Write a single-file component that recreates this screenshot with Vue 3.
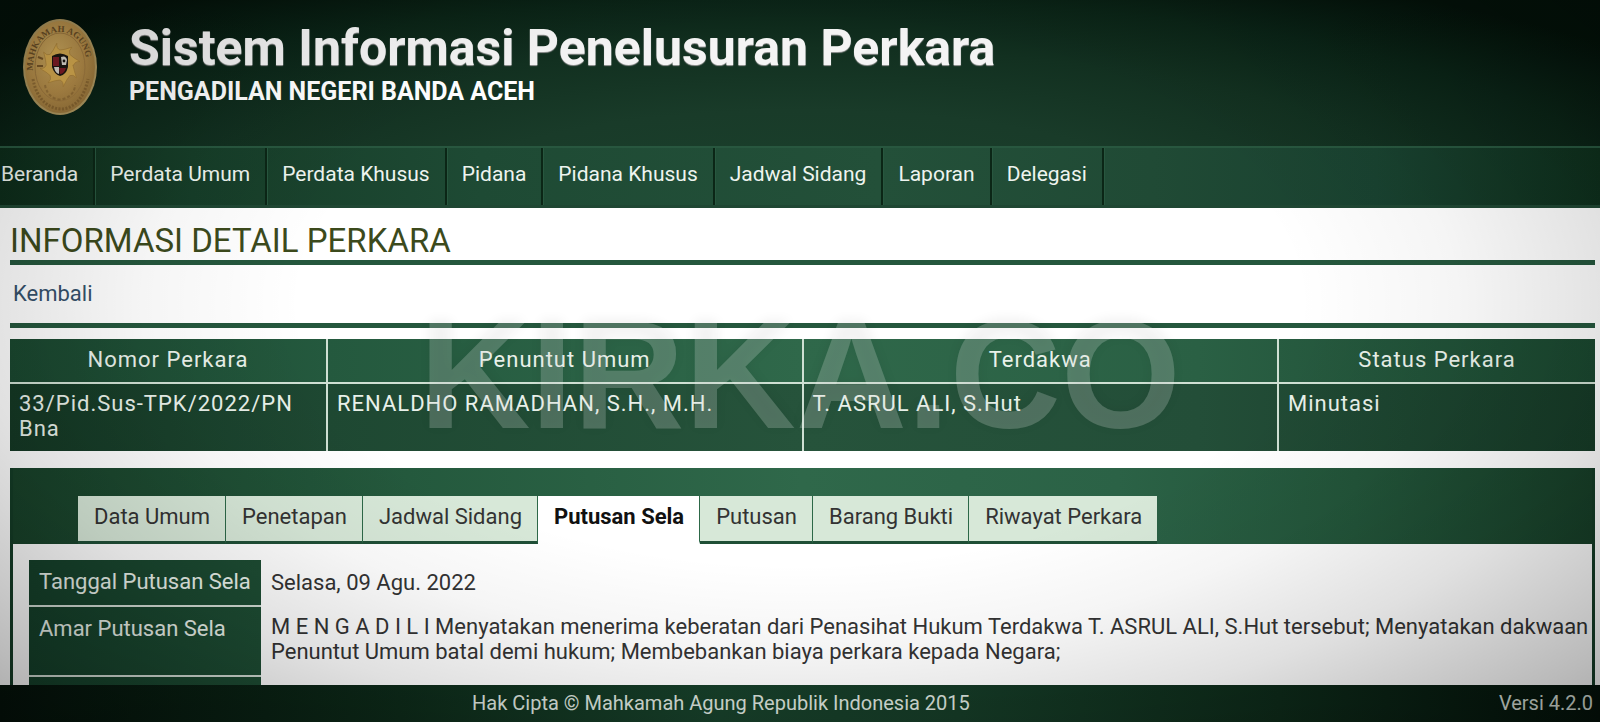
<template>
  <div class="page">
    <header class="site-header">
      <svg class="emblem" viewBox="0 0 74 96" role="img" aria-label="Mahkamah Agung">
        <defs>
          <radialGradient id="gold" cx="42%" cy="36%" r="68%">
            <stop offset="0" stop-color="#d0ac60" />
            <stop offset="0.6" stop-color="#b58d49" />
            <stop offset="1" stop-color="#96733a" />
          </radialGradient>
          <path id="arcTop" d="M10 52 C8 0 66 0 64 52" />
        </defs>
        <ellipse cx="37" cy="48" rx="37" ry="48" fill="#ae965e" />
        <ellipse cx="37" cy="48" rx="35" ry="46" fill="url(#gold)" />
        <ellipse cx="37" cy="48" rx="25" ry="34" fill="none" stroke="#a07a40" stroke-width="1" />
        <text class="emblem-text"><textPath href="#arcTop">MAHKAMAH AGUNG</textPath></text>
        <path d="M10 60 C14 82 27 90 39 90 C53 89 62 76 65 60" fill="none" stroke="#6d4d22" stroke-width="3" stroke-dasharray="2 1.5" opacity="0.5" />
        <path d="M22 66 C24 78 34 82 40 80 C48 78 52 72 52 66" fill="none" stroke="#6d4d22" stroke-width="2" stroke-dasharray="3 2" opacity="0.4" />
        <path d="M15 38 l5 2 M14 47 l6 0" stroke="#7a5828" stroke-width="2" />
        <path :d="sunPath" fill="#d8ac50" stroke="#a77d35" stroke-width="0.6" />
        <path d="M29 37 Q37 32 45 37 L45 48 Q43 56 37 57 Q31 55 29 48 Z" fill="#1c1712" />
        <path d="M30 38 h6 v9 h-6 Z M36 49 h7 q-2 6 -6 6 Z" fill="#7e1c26" />
        <path d="M31 48 h5 v7 q-4 -1 -5 -7 Z M38 38 q5 -2 6 3 l-1 5 h-4 Z" fill="#dedad0" />
        <circle cx="41" cy="42" r="1.4" fill="#181410" />
      </svg>
      <div class="site-name">
        <h1>Sistem Informasi Penelusuran Perkara</h1>
        <h2>PENGADILAN NEGERI BANDA ACEH</h2>
      </div>
    </header>

    <nav class="main-nav">
      <a v-for="item in menu" :key="item" href="#">{{ item }}</a>
    </nav>

    <main class="content">
      <h3 class="page-title">INFORMASI DETAIL PERKARA</h3>
      <div class="back-bar">
        <a href="#">Kembali</a>
      </div>

      <table class="case-table">
        <thead>
          <tr>
            <th class="narrow">Nomor Perkara</th>
            <th>Penuntut Umum</th>
            <th>Terdakwa</th>
            <th class="narrow">Status Perkara</th>
          </tr>
        </thead>
        <tbody>
          <tr>
            <td>33/Pid.Sus-TPK/2022/PN Bna</td>
            <td>RENALDHO RAMADHAN, S.H., M.H.</td>
            <td>T. ASRUL ALI, S.Hut</td>
            <td>Minutasi</td>
          </tr>
        </tbody>
      </table>

      <section class="panel">
        <div class="tabs" role="tablist">
          <button
            v-for="tab in tabs"
            :key="tab"
            type="button"
            role="tab"
            :aria-selected="tab === activeTab"
            :class="{ active: tab === activeTab }"
            @click="activeTab = tab"
          >{{ tab }}</button>
        </div>
        <div class="panel-body">
          <table class="detail-table">
            <tbody>
              <tr>
                <th scope="row">Tanggal Putusan Sela</th>
                <td>Selasa, 09 Agu. 2022</td>
              </tr>
              <tr class="ruling">
                <th scope="row">Amar Putusan Sela</th>
                <td>M E N G A D I L I Menyatakan menerima keberatan dari Penasihat Hukum Terdakwa T. ASRUL ALI, S.Hut tersebut; Menyatakan dakwaan Penuntut Umum batal demi hukum; Membebankan biaya perkara kepada Negara;</td>
              </tr>
              <tr>
                <th scope="row"></th>
                <td></td>
              </tr>
            </tbody>
          </table>
        </div>
      </section>
    </main>

    <footer class="site-footer">
      <span class="copyright">Hak Cipta © Mahkamah Agung Republik Indonesia 2015</span>
      <span>Versi 4.2.0</span>
    </footer>

    <div class="shade"></div>
    <div class="watermark">KIRKA.CO</div>
  </div>
</template>

<script setup>
import { ref } from 'vue'

const menu = [
  'Beranda',
  'Perdata Umum',
  'Perdata Khusus',
  'Pidana',
  'Pidana Khusus',
  'Jadwal Sidang',
  'Laporan',
  'Delegasi'
]

const tabs = [
  'Data Umum',
  'Penetapan',
  'Jadwal Sidang',
  'Putusan Sela',
  'Putusan',
  'Barang Bukti',
  'Riwayat Perkara'
]

const activeTab = ref('Putusan Sela')

// eight curved rays around the shield
const rays = 8
const point = (angle, r) => `${(37 + Math.cos(angle) * r * 0.92).toFixed(1)} ${(46 + Math.sin(angle) * r).toFixed(1)}`
let sunPath = `M${point(0, 14)}`
for (let i = 0; i < rays; i++) {
  const a = (i / rays) * Math.PI * 2
  const step = (Math.PI * 2) / rays
  sunPath += ` Q${point(a + step * 0.4, 16)} ${point(a + step * 0.8, 22)} Q${point(a + step * 0.7, 17)} ${point(a + step, 15)}`
}
sunPath += ' Z'
</script>

<style>
body {
  background: #fff;
}
</style>

<style scoped>
.page {
  position: relative;
  display: flex;
  flex-direction: column;
  height: 100vh;
  overflow: hidden;
  background: #fff;
  color: #333;
  font-family: Roboto, "Liberation Sans", sans-serif;
  font-size: 22px;
  line-height: 25px;
}

.site-header {
  display: flex;
  align-items: flex-start;
  gap: 32px;
  box-sizing: border-box;
  height: 146px;
  padding: 19px 23px;
  background: radial-gradient(ellipse 64% 170% at 50% 135%, #1a402c 0%, #193b29 35%, #123020 60%, #0a2316 80%, #031109 100%);
}

.emblem {
  flex: none;
  width: 74px;
  height: 96px;
}

.emblem-text {
  font-family: "Liberation Serif", serif;
  font-size: 9px;
  font-weight: 700;
  fill: #6a4e26;
}

.site-name h1 {
  margin: 0;
  color: #f4f4f4;
  font-size: 50px;
  font-weight: 700;
  line-height: 58px;
  text-shadow: 0 1px 1px #999;
}

.site-name h2 {
  margin: 0;
  color: #fff;
  font-size: 25px;
  font-weight: 700;
  line-height: 30px;
}

.main-nav {
  display: flex;
  border-top: 2px solid #28573f;
  border-bottom: 3px solid #1f4733;
  background: linear-gradient(90deg, #0d2c1a 0%, #163d28 12%, #1e4a34 30%, #235039 55%, #204a35 72%, #194230 86%, #0e2f1c 100%);
  font-size: 21px;
}

.main-nav a {
  padding: 14px 15px 18px;
  border-right: 2px solid #0b2616;
  box-shadow: 1px 0 #28573f;
  color: #eef4ef;
  text-decoration: none;
}

.main-nav a:first-child {
  padding-left: 1px;
}

.content {
  flex: 1;
  min-height: 0;
  padding: 14px 5px 0 10px;
  overflow-y: auto;
  scrollbar-width: none;
}

.page-title {
  margin: 0;
  border-bottom: 5px solid #25573d;
  color: #3c4a1c;
  font-size: 33px;
  font-weight: 400;
  line-height: 38px;
}

.back-bar {
  padding: 16px 3px 17px;
  border-bottom: 5px solid #25573d;
}

.back-bar a {
  color: #36516b;
  text-decoration: none;
}

.case-table {
  width: 100%;
  margin-top: 11px;
  border-collapse: collapse;
  table-layout: fixed;
  background: linear-gradient(90deg, #1a472f 0%, #24593e 20%, #2f684a 50%, #2a6044 75%, #1a472f 100%);
  color: #e9f1ea;
  letter-spacing: 1px;
}

.case-table tbody {
  background: linear-gradient(90deg, #143824 0%, #1e4832 20%, #26533b 50%, #234e38 75%, #163b27 100%);
}

.case-table th,
.case-table td {
  box-sizing: border-box;
  border-left: 2px solid #cfe0d3;
}

.case-table th:first-child,
.case-table td:first-child {
  border-left: 0;
}

.case-table th {
  padding: 8px 8px 10px;
  border-bottom: 2px solid #cfe0d3;
  font-weight: 400;
}

.case-table .narrow {
  width: 20%;
}

.case-table td {
  padding: 7px 9px 10px;
  vertical-align: top;
}

.panel {
  margin-top: 17px;
  border: 3px solid #143c26;
  border-top: 0;
  background: #fff;
}

.tabs {
  display: flex;
  padding: 28px 65px 0;
  background: linear-gradient(90deg, #184129 0%, #24593d 25%, #2f684a 50%, #2b6246 70%, #225439 85%, #173f28 100%);
}

.tabs button {
  padding: 8px 15px 12px 16px;
  border: 0;
  border-right: 1px solid #2d6848;
  border-bottom: 3px solid #1f4f36;
  background: #d7e8d8;
  color: #333;
  font: inherit;
}

.tabs button:last-child {
  border-right: 0;
}

.tabs button.active {
  border-bottom-color: #fff;
  background: #fff;
  color: #111;
  font-weight: 700;
}

.panel-body {
  padding: 16px 0 16px 16px;
}

.detail-table {
  width: 100%;
  border-collapse: collapse;
}

.detail-table th {
  box-sizing: border-box;
  width: 232px;
  height: 46px;
  padding: 9px 10px;
  border-bottom: 2px solid #d3ddd5;
  background: linear-gradient(90deg, #15402a, #1d4c33);
  color: #e8f0e9;
  font-weight: 400;
  text-align: left;
  vertical-align: top;
  white-space: nowrap;
}

.detail-table td {
  padding: 10px 0 9px 10px;
  vertical-align: top;
}

.detail-table .ruling td {
  padding: 8px 0 12px 10px;
}

.site-footer {
  display: flex;
  align-items: center;
  padding: 6px 7px;
  background: linear-gradient(90deg, #04120a 0%, #0d2a19 25%, #17402a 45%, #153a26 60%, #0d2a19 80%, #04120a 100%);
  color: #d9e1db;
  font-size: 20px;
}

.copyright {
  flex: 1;
  padding-right: 64px;
  text-align: center;
}

.shade {
  position: absolute;
  inset: 0;
  background: radial-gradient(ellipse at 50% 42%, transparent 44%, rgba(0, 0, 0, 0.04) 58%, rgba(0, 0, 0, 0.12) 73%, rgba(0, 0, 0, 0.27) 92%, rgba(0, 0, 0, 0.34) 100%);
  pointer-events: none;
}

.watermark {
  position: absolute;
  top: 52%;
  left: 50%;
  color: rgba(255, 255, 255, 0.2);
  font-family: "Liberation Sans", sans-serif;
  font-size: 154px;
  font-weight: 700;
  line-height: 154px;
  text-shadow: 0 -2px 12px rgba(0, 0, 0, 0.06);
  transform: translate(-50%, -50%);
  pointer-events: none;
}
</style>
